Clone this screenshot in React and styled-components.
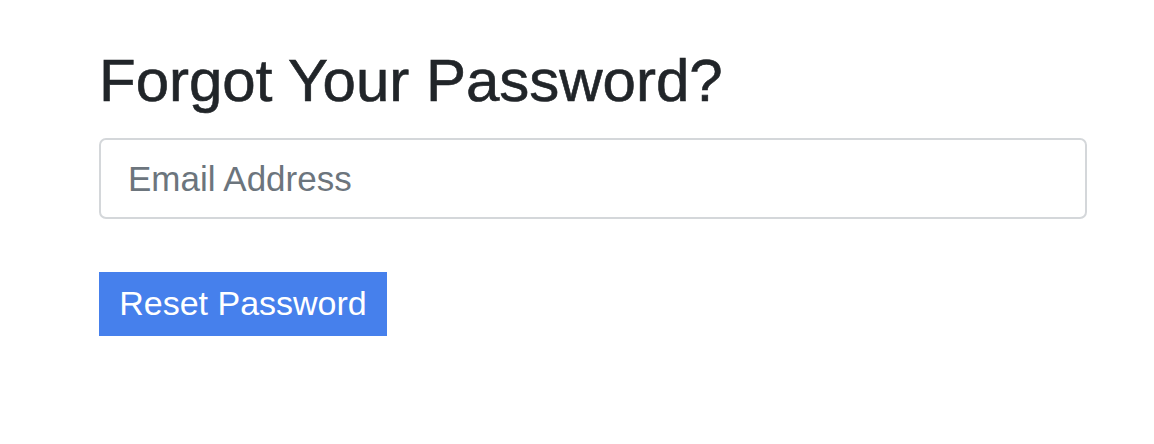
import React from 'react';
import styled, { createGlobalStyle } from 'styled-components';

const GlobalStyle = createGlobalStyle`
  html, body {
    margin: 0;
    padding: 0;
    background: #ffffff;
    font-family: "Liberation Sans", Arial, sans-serif;
  }
`;

const Page = styled.div`
  padding: 45px 0 0 99px;
  width: 988px;
`;

const Title = styled.h1`
  margin: 0 0 21px;
  font-size: 60px;
  line-height: 1.2;
  font-weight: 400;
  color: #212529;
  -webkit-text-stroke: 0.6px #212529;
`;

const Form = styled.form`
  display: flex;
  flex-direction: column;
  align-items: flex-start;
  gap: 53px;
`;

const EmailInput = styled.input`
  box-sizing: border-box;
  width: 100%;
  height: 81px;
  padding: 0 27px;
  border: 2px solid #d4d7da;
  border-radius: 7px;
  font-family: inherit;
  font-size: 35px;
  color: #495057;
  outline: none;

  &::placeholder {
    color: #6c757d;
  }
`;

const SubmitButton = styled.button`
  box-sizing: border-box;
  width: 288px;
  height: 64px;
  padding: 0 0 2px;
  border: none;
  border-radius: 0;
  background: #4680ec;
  color: #ffffff;
  font-family: inherit;
  font-size: 34px;
  cursor: pointer;
`;

const App = () => {
  return (
    <>
      <GlobalStyle />
      <Page>
        <Title>Forgot Your Password?</Title>
        <Form onSubmit={(e) => e.preventDefault()}>
          <EmailInput type="email" placeholder="Email Address" />
          <SubmitButton type="submit">Reset Password</SubmitButton>
        </Form>
      </Page>
    </>
  );
};

export default App;
